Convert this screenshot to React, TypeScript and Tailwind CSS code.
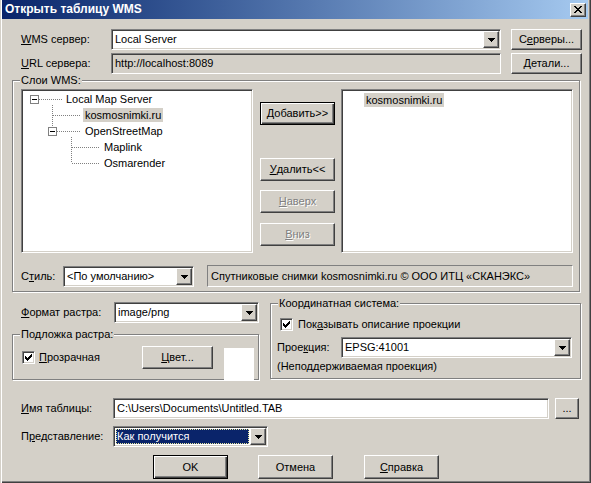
import type { ReactNode } from "react";

const sunken =
  "border border-[#808080] border-r-white border-b-white shadow-[inset_1px_1px_0_#404040,inset_-1px_-1px_0_#d4d0c8]";
const raised =
  "border border-white border-r-[#404040] border-b-[#404040] shadow-[inset_-1px_-1px_0_#808080]";
const defaultRaised =
  "border border-black shadow-[inset_1px_1px_0_#fff,inset_-1px_-1px_0_#404040,inset_-2px_-2px_0_#808080]";
const etched = "border border-[#808080] shadow-[1px_1px_0_#fff,inset_1px_1px_0_#fff]";

function U({ children }: { children: ReactNode }) {
  return <span className="underline decoration-1 underline-offset-[1px]">{children}</span>;
}

function Btn({
  children,
  className = "",
  isDefault = false,
  disabled = false,
}: {
  children: ReactNode;
  className?: string;
  isDefault?: boolean;
  disabled?: boolean;
}) {
  return (
    <div
      className={`flex shrink-0 items-center justify-center bg-[#d4d0c8] ${isDefault ? defaultRaised : raised} ${
        disabled ? "text-[#808080] [text-shadow:1px_1px_0_#fff]" : ""
      } ${className}`}
    >
      {children}
    </div>
  );
}

function Arrow() {
  return (
    <svg width="7" height="4" viewBox="0 0 7 4" shapeRendering="crispEdges">
      <path d="M0 0h7v1h-7z M1 1h5v1h-5z M2 2h3v1h-3z M3 3h1v1h-1z" fill="#000" />
    </svg>
  );
}

function Combo({
  children,
  className = "",
  selected = false,
}: {
  children: ReactNode;
  className?: string;
  selected?: boolean;
}) {
  return (
    <div className={`flex h-[21px] shrink-0 bg-white p-[1px] ${sunken} ${className}`}>
      {selected ? (
        <div className="m-[1px] flex min-w-0 flex-1 items-center bg-[#0a246a] pl-[1px] text-white outline-1 outline-offset-[-1px] outline-[#e8e8a0] outline-dotted">
          {children}
        </div>
      ) : (
        <div className="flex min-w-0 flex-1 items-center pl-[2px]">{children}</div>
      )}
      <div className={`flex h-full w-[16px] shrink-0 items-center justify-center bg-[#d4d0c8] ${raised}`}>
        <Arrow />
      </div>
    </div>
  );
}

function Check() {
  return (
    <div className={`flex h-[13px] w-[13px] shrink-0 items-center justify-center bg-white ${sunken}`}>
      <svg width="7" height="7" viewBox="0 0 7 7" shapeRendering="crispEdges">
        <path
          d="M6 0h1v1h-1z M5 1h2v1h-2z M0 2h1v1h-1z M4 2h3v1h-3z M0 3h2v1h-2z M3 3h3v1h-3z M0 4h5v1h-5z M1 5h3v1h-3z M2 6h1v1h-1z"
          fill="#000"
        />
      </svg>
    </div>
  );
}

function Group({
  title,
  className = "",
  children,
}: {
  title: string;
  className?: string;
  children: ReactNode;
}) {
  return (
    <div className={`relative shrink-0 ${etched} ${className}`}>
      <span className="absolute -top-[7px] left-[7px] bg-[#d4d0c8] px-[1px] leading-[13px]">{title}</span>
      {children}
    </div>
  );
}

function TreeLines() {
  const dot = { stroke: "#808080", strokeDasharray: "1 1" };
  return (
    <svg className="absolute left-[1px] top-[1px]" width="228" height="160" shapeRendering="crispEdges">
      <line x1="16" y1="8.5" x2="39" y2="8.5" {...dot} />
      <line x1="29.5" y1="14" x2="29.5" y2="36" {...dot} />
      <line x1="30" y1="24.5" x2="57" y2="24.5" {...dot} />
      <line x1="34" y1="40.5" x2="58" y2="40.5" {...dot} />
      <line x1="48.5" y1="46" x2="48.5" y2="72" {...dot} />
      <line x1="49" y1="56.5" x2="76" y2="56.5" {...dot} />
      <line x1="49" y1="72.5" x2="76" y2="72.5" {...dot} />
      <rect x="7.5" y="4.5" width="8" height="8" fill="#fff" stroke="#808080" />
      <line x1="9" y1="8.5" x2="14" y2="8.5" stroke="#000" />
      <rect x="25.5" y="36.5" width="8" height="8" fill="#fff" stroke="#808080" />
      <line x1="27" y1="40.5" x2="32" y2="40.5" stroke="#000" />
    </svg>
  );
}

function TreeRow({ indent, label, active = false }: { indent: string; label: string; active?: boolean }) {
  return (
    <div className="flex h-[16px] items-center">
      <span className={`${indent} flex h-[14px] items-center px-[2px] ${active ? "bg-[#d4d0c8]" : ""}`}>{label}</span>
    </div>
  );
}

function CloseGlyph() {
  return (
    <svg width="8" height="7" viewBox="0 0 8 7" shapeRendering="crispEdges">
      <path
        d="M0 0h2v1h-2z M6 0h2v1h-2z M1 1h2v1h-2z M5 1h2v1h-2z M2 2h4v1h-4z M3 3h2v1h-2z M2 4h4v1h-4z M1 5h2v1h-2z M5 5h2v1h-2z M0 6h2v1h-2z M6 6h2v1h-2z"
        fill="#000"
      />
    </svg>
  );
}

export default function App() {
  return (
    <div className="relative h-[483px] w-[591px] overflow-hidden bg-[#d4d0c8] font-['Liberation_Sans',Arial,sans-serif] text-[11px] leading-[13px] text-black shadow-[inset_1px_0_0_#d4d0c8,inset_2px_0_0_#fff,inset_-1px_-1px_0_#404040,inset_-2px_-2px_0_#808080]">
      {/* title bar */}
      <div className="ml-[2px] mr-[3px] flex h-[19px] items-center bg-gradient-to-r from-[#0a246a] to-[#a6caf0] pl-[3px] pr-[2px]">
        <span className="text-[12px] font-bold text-white">Открыть таблицу WMS</span>
        <div className={`ml-auto flex h-[14px] w-[16px] items-center justify-center bg-[#d4d0c8] ${raised}`}>
          <CloseGlyph />
        </div>
      </div>

      {/* server */}
      <div className="mt-[10px] flex h-[21px] items-center">
        <span className="ml-[21px] w-[90px]">
          <U>W</U>MS сервер:
        </span>
        <Combo className="w-[390px]">Local Server</Combo>
        <Btn className="ml-[10px] h-[21px] w-[71px]">
          С<U>е</U>рверы...
        </Btn>
      </div>
      <div className="mt-[3px] flex h-[21px] items-center">
        <span className="ml-[21px] w-[90px]">
          <U>U</U>RL сервера:
        </span>
        <div className={`flex h-[21px] w-[390px] items-center pl-[3px] ${sunken}`}>http://localhost:8089</div>
        <Btn className="ml-[10px] h-[21px] w-[71px]">
          <U>Д</U>етали...
        </Btn>
      </div>

      {/* layers */}
      <Group title="Слои WMS:" className="ml-[12px] mt-[6px] h-[212px] w-[568px]">
        <div className="pl-[8px] pt-[8px]">
          <div className="flex">
            <div className={`relative h-[164px] w-[232px] bg-white p-[1px] ${sunken}`}>
              <TreeLines />
              <div className="relative">
                <TreeRow indent="ml-[41px]" label="Local Map Server" />
                <TreeRow indent="ml-[60px]" label="kosmosnimki.ru" active />
                <TreeRow indent="ml-[60px]" label="OpenStreetMap" />
                <TreeRow indent="ml-[79px]" label="Maplink" />
                <TreeRow indent="ml-[79px]" label="Osmarender" />
              </div>
            </div>
            <div className="ml-[7px] flex w-[75px] flex-col">
              <Btn isDefault className="mt-[13px] h-[23px] w-[75px]">
                <U>Д</U>обавить&gt;&gt;
              </Btn>
              <Btn className="mt-[33px] h-[23px] w-[75px]">
                <U>У</U>далить&lt;&lt;
              </Btn>
              <Btn disabled className="mt-[9px] h-[23px] w-[75px]">
                <U>Н</U>аверх
              </Btn>
              <Btn disabled className="mt-[10px] h-[23px] w-[75px]">
                <U>В</U>низ
              </Btn>
            </div>
            <div className={`ml-[6px] h-[164px] w-[232px] bg-white p-[1px] ${sunken}`}>
              <div className="flex pl-[21px] pt-[2px]">
                <span className="flex h-[14px] items-center bg-[#d4d0c8] px-[2px]">kosmosnimki.ru</span>
              </div>
            </div>
          </div>
          <div className="mt-[12px] flex items-start">
            <span className="flex h-[22px] w-[42px] items-center pt-[1px]">
              С<U>т</U>иль:
            </span>
            <Combo className="mt-[1px] w-[131px]">&lt;По умолчанию&gt;</Combo>
            <div className="ml-[13px] flex h-[22px] w-[366px] items-center border border-[#808080] border-r-white border-b-white pl-[3px]">
              Спутниковые снимки kosmosnimki.ru © ООО ИТЦ «СКАНЭКС»
            </div>
          </div>
        </div>
      </Group>

      {/* raster + coords */}
      <div className="mt-[10px] flex h-[80px]">
        <div className="ml-[12px] w-[248px] shrink-0">
          <div className="flex h-[21px] items-center">
            <span className="w-[102px] pl-[9px]">
              <U>Ф</U>ормат растра:
            </span>
            <Combo className="w-[145px]">image/png</Combo>
          </div>
          <Group title="Подложка растра:" className="mt-[11px] h-[46px] w-[247px]">
            <div className="flex items-start">
              <div className="ml-[9px] mt-[16px] flex w-[120px] items-center">
                <Check />
                <span className="ml-[4px]">
                  <U>П</U>розрачная
                </span>
              </div>
              <Btn className="mt-[11px] h-[23px] w-[71px]">
                <U>Ц</U>вет...
              </Btn>
              <div className="ml-[11px] mt-[13px] h-[33px] w-[30px] shrink-0 bg-white" />
            </div>
          </Group>
        </div>
        <Group title="Координатная система:" className="ml-[10px] mt-[1px] h-[76px] w-[311px]">
          <div className="flex flex-col">
            <div className="ml-[9px] mt-[14px] flex h-[13px] items-center">
              <Check />
              <span className="ml-[5px]">
                Пок<U>а</U>зывать описание проекции
              </span>
            </div>
            <div className="ml-[6px] mt-[6px] flex h-[21px] items-center">
              <span className="w-[64px]">
                Прое<U>к</U>ция:
              </span>
              <Combo className="w-[231px]">EPSG:41001</Combo>
            </div>
            <div className="ml-[6px] mt-[2px]">(Неподдерживаемая проекция)</div>
          </div>
        </Group>
      </div>

      {/* table name */}
      <div className="mt-[16px] flex h-[21px] items-center">
        <span className="ml-[21px] w-[92px]">
          <U>И</U>мя таблицы:
        </span>
        <div className={`flex h-[21px] w-[436px] items-center bg-white pl-[3px] ${sunken}`}>
          C:\Users\Documents\Untitled.TAB
        </div>
        <Btn className="ml-[6px] h-[21px] w-[24px]">...</Btn>
      </div>
      <div className="mt-[7px] flex h-[21px] items-center">
        <span className="ml-[21px] w-[92px]">
          П<U>р</U>едставление:
        </span>
        <Combo selected className="w-[155px]">
          Как получится
        </Combo>
      </div>

      {/* dialog buttons */}
      <div className="mt-[8px] flex h-[24px]">
        <Btn isDefault className="ml-[153px] h-[24px] w-[75px]">
          OK
        </Btn>
        <Btn className="ml-[30px] h-[24px] w-[75px]">Отмена</Btn>
        <Btn className="ml-[31px] h-[24px] w-[75px]">
          <U>С</U>правка
        </Btn>
      </div>
    </div>
  );
}
